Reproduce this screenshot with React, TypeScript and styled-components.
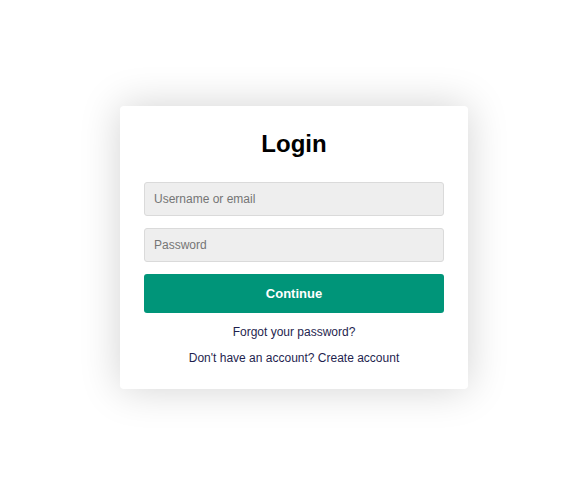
import React from "react";
import styled, { createGlobalStyle } from "styled-components";

const Global = createGlobalStyle`
  html, body { margin: 0; padding: 0; background: #fff; }
  body { font-family: "Liberation Sans", Arial, sans-serif; }
`;

const Page = styled.div`
  min-height: 490px;
  display: flex;
  align-items: center;
  justify-content: center;
  padding: 5px 0 0 21px;
  box-sizing: border-box;
`;

const Card = styled.form`
  width: 348px;
  box-sizing: border-box;
  background: #fff;
  border-radius: 4px;
  box-shadow: 0 0 40px rgba(0, 0, 0, 0.18);
  padding: 24px 24px 23px;
  display: flex;
  flex-direction: column;
`;

const Title = styled.h1`
  margin: 0 0 24px;
  font-size: 24px;
  font-weight: bold;
  text-align: center;
  color: #000;
`;

const Input = styled.input`
  height: 34px;
  box-sizing: border-box;
  width: 100%;
  margin-bottom: 12px;
  padding: 0 9px;
  font-family: "Liberation Sans", Arial, sans-serif;
  font-size: 12px;
  background: #eeeeee;
  border: 1px solid #dadada;
  border-radius: 3px;
  color: #333;
  &::placeholder { color: #757575; }
`;

const Button = styled.button`
  height: 39px;
  width: 100%;
  border: none;
  border-radius: 3px;
  background: #009579;
  color: #fff;
  font-family: "Liberation Sans", Arial, sans-serif;
  font-size: 13px;
  font-weight: bold;
  cursor: pointer;
  margin-bottom: 11px;
`;

const LinkText = styled.p<{ $gap?: number }>`
  margin: ${(p) => p.$gap ?? 0}px 0 0;
  text-align: center;
  font-size: 12px;
  line-height: 16px;
  color: #1f1f4f;
`;

const A = styled.a`
  color: inherit;
  text-decoration: none;
`;

export default function App() {
  return (
    <>
      <Global />
      <Page>
        <Card onSubmit={(e) => e.preventDefault()}>
          <Title>Login</Title>
          <Input placeholder="Username or email" />
          <Input type="password" placeholder="Password" />
          <Button type="submit">Continue</Button>
          <LinkText>
            <A href="#">Forgot your password?</A>
          </LinkText>
          <LinkText $gap={10}>
            Don't have an account? <A href="#">Create account</A>
          </LinkText>
        </Card>
      </Page>
    </>
  );
}
